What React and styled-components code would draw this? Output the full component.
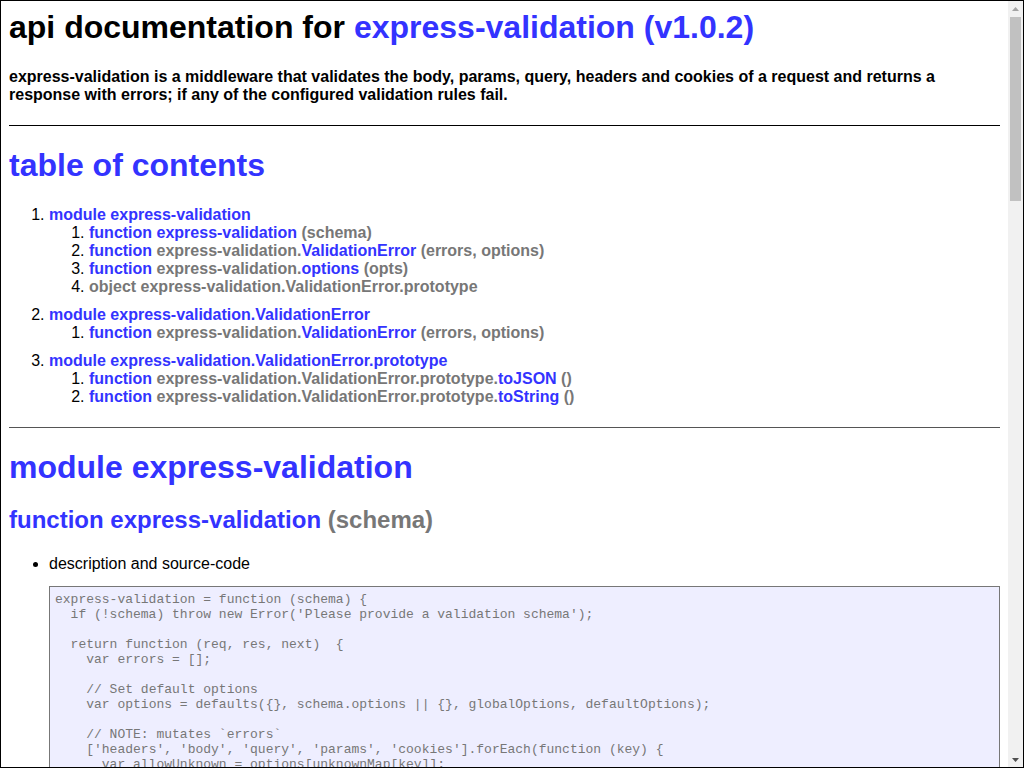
import React from "react";
import styled, { createGlobalStyle } from "styled-components";

const Global = createGlobalStyle`
  html, body { margin: 0; padding: 0; height: 100%; overflow: hidden; background: #fff; }
  #root { height: 100%; }
`;

const Frame = styled.div`
  box-sizing: border-box;
  height: 100vh;
  border: 1px solid #000;
  display: flex;
  font-family: "Liberation Sans", Arial, Helvetica, sans-serif;
  color: #000;
`;

const Page = styled.main`
  flex: 1;
  min-width: 0;
  overflow: hidden;
  padding: 0 8px 8px;
`;

const Rail = styled.div`
  width: 15px;
  flex: none;
  display: flex;
  flex-direction: column;
  background: #f1f1f1;
`;

const RailButton = styled.div`
  height: 15px;
  flex: none;
  display: flex;
  align-items: center;
  justify-content: center;
`;

const Track = styled.div`
  flex: 1;
  padding: 1px 2px 0;
`;

const Thumb = styled.div`
  height: 184px;
  background: #c1c1c1;
`;

const Title = styled.h1`
  font-size: 32px;
  font-weight: bold;
  margin: 8px 0 22px;
`;

const Lede = styled.h4`
  font-size: 16px;
  font-weight: bold;
  margin: 0 0 21px;
`;

const Section = styled.div`
  border-top: 1px solid ${(p) => (p.$tone === "muted" ? "#555" : "#000")};
  margin-top: 20px;
`;

const Heading = styled.h1`
  font-size: 32px;
  font-weight: bold;
  margin: 21px 0 20px;
`;

const FnHeading = styled.h2`
  font-size: 24px;
  font-weight: bold;
  margin: 19px 0 21px;
`;

const Link = styled.a`
  color: #33f;
  font-weight: bold;
  text-decoration: none;
  cursor: pointer;
  &:hover { text-decoration: underline; }
`;

const Sig = styled.span`
  color: #777;
  font-weight: bold;
`;

const TocList = styled.ol`
  margin: ${(p) => (p.$nested ? "0" : "22px 0 21px")};
  padding-left: 40px;
`;

const TocItem = styled.li`
  margin-top: ${(p) => (p.$module ? "10px" : "0")};
  color: #000;
`;

const DetailList = styled.ul`
  margin: 16px 0;
  padding-left: 40px;
`;

const DetailItem = styled.li`
  color: #000;
  font-size: 16px;
`;

const Code = styled.pre`
  margin: 13px 0;
  padding: 5px;
  border: 1px solid #777;
  background: #eef;
  color: #777;
  font-family: "Liberation Mono", "Courier New", monospace;
  font-size: 13px;
  line-height: 15px;
  white-space: pre-wrap;
  overflow: auto;
`;

const Footer = styled.div`
  margin-top: 20px;
  text-align: center;
  color: #555;
  font-size: 16px;
`;

const Q = "express-validation";

const mainSrc = `express-validation = function (schema) {
  if (!schema) throw new Error('Please provide a validation schema');

  return function (req, res, next)  {
    var errors = [];

    // Set default options
    var options = defaults({}, schema.options || {}, globalOptions, defaultOptions);

    // NOTE: mutates \`errors\`
    ['headers', 'body', 'query', 'params', 'cookies'].forEach(function (key) {
      var allowUnknown = options[unknownMap[key]];
      var entireObject = req[key];
      var toValidateObj = schema[key];
      if (!toValidateObj) return;

      var toValidate = toValidateObj;
      validate(errors, req[key], toValidate, key, allowUnknown, options.contextRequest ? req : null);
    });

    if (errors && errors.length === 0) return next();

    return next(new ValidationError(errors, options));
  };
}`;

const errSrc = `function ValidationError(errors, options) {
  this.name = 'ValidationError';
  this.message = 'validation error';
  this.errors = errors;
  this.flatten = options.flatten;
  this.status = options.status;
  this.statusText = options.statusText;
}`;

const optSrc = `function (opts) {
  if (!opts) {
    globalOptions = {};
    return;
  }

  globalOptions = defaults({}, globalOptions, opts);
}`;

const jsonSrc = `function () {
  if (this.flatten) return flatten(map(this.errors, 'messages'));
  return {
    status: this.status,
    statusText: this.statusText,
    errors: this.errors
  };
}`;

const strSrc = `function () {
  return JSON.stringify(this.toJSON());
}`;

const FnBlock = ({ kind, prefix, name, sig, src, usage }) => (
  <>
    <FnHeading>
      <Link>{kind} </Link>
      {prefix && <Sig>{prefix}</Sig>}
      <Link>{name}</Link> <Sig>{sig}</Sig>
    </FnHeading>
    <DetailList>
      <DetailItem>
        description and source-code
        <Code>{src}</Code>
      </DetailItem>
      <DetailItem>
        example usage
        <Code>{usage}</Code>
      </DetailItem>
    </DetailList>
  </>
);

const Arrow = ({ down, color }) => (
  <svg width="7" height="4" viewBox="0 0 7 4" aria-hidden="true">
    <polygon points={down ? "0,0 7,0 3.5,4" : "0,4 7,4 3.5,0"} fill={color} />
  </svg>
);

export default function App() {
  return (
    <>
      <Global />
      <Frame>
        <Page>
          <Title>
            api documentation for <Link>express-validation (v1.0.2)</Link>
          </Title>
          <Lede>
            express-validation is a middleware that validates the body, params,
            query, headers and cookies of a request and returns a response with
            errors; if any of the configured validation rules fail.
          </Lede>

          <Section>
            <Heading>
              <Link>table of contents</Link>
            </Heading>
            <TocList>
              <TocItem $module>
                <Link>module express-validation</Link>
                <TocList $nested>
                  <TocItem>
                    <Link>function express-validation</Link> <Sig>(schema)</Sig>
                  </TocItem>
                  <TocItem>
                    <Link>function </Link>
                    <Sig>express-validation.</Sig>
                    <Link>ValidationError</Link> <Sig>(errors, options)</Sig>
                  </TocItem>
                  <TocItem>
                    <Link>function </Link>
                    <Sig>express-validation.</Sig>
                    <Link>options</Link> <Sig>(opts)</Sig>
                  </TocItem>
                  <TocItem>
                    <Sig>object express-validation.ValidationError.prototype</Sig>
                  </TocItem>
                </TocList>
              </TocItem>
              <TocItem $module>
                <Link>module express-validation.ValidationError</Link>
                <TocList $nested>
                  <TocItem>
                    <Link>function </Link>
                    <Sig>express-validation.</Sig>
                    <Link>ValidationError</Link> <Sig>(errors, options)</Sig>
                  </TocItem>
                </TocList>
              </TocItem>
              <TocItem $module>
                <Link>module express-validation.ValidationError.prototype</Link>
                <TocList $nested>
                  <TocItem>
                    <Link>function </Link>
                    <Sig>express-validation.ValidationError.prototype.</Sig>
                    <Link>toJSON</Link> <Sig>()</Sig>
                  </TocItem>
                  <TocItem>
                    <Link>function </Link>
                    <Sig>express-validation.ValidationError.prototype.</Sig>
                    <Link>toString</Link> <Sig>()</Sig>
                  </TocItem>
                </TocList>
              </TocItem>
            </TocList>
          </Section>

          <Section $tone="muted">
            <Heading>
              <Link>module express-validation</Link>
            </Heading>
            <FnBlock kind="function" name={Q} sig="(schema)" src={mainSrc} usage="n/a" />
            <FnBlock kind="function" prefix="express-validation." name="ValidationError" sig="(errors, options)" src={errSrc} usage="n/a" />
            <FnBlock kind="function" prefix="express-validation." name="options" sig="(opts)" src={optSrc} usage="n/a" />
          </Section>

          <Section $tone="muted">
            <Heading>
              <Link>module express-validation.ValidationError</Link>
            </Heading>
            <FnBlock kind="function" prefix="express-validation." name="ValidationError" sig="(errors, options)" src={errSrc} usage="n/a" />
          </Section>

          <Section $tone="muted">
            <Heading>
              <Link>module express-validation.ValidationError.prototype</Link>
            </Heading>
            <FnBlock kind="function" prefix="express-validation.ValidationError.prototype." name="toJSON" sig="()" src={jsonSrc} usage="n/a" />
            <FnBlock kind="function" prefix="express-validation.ValidationError.prototype." name="toString" sig="()" src={strSrc} usage="n/a" />
          </Section>

          <Footer>
            [ this document was created with <Link>utility2</Link> ]
          </Footer>
        </Page>
        <Rail aria-hidden="true">
          <RailButton>
            <Arrow color="#a3a3a3" />
          </RailButton>
          <Track>
            <Thumb />
          </Track>
          <RailButton>
            <Arrow down color="#505050" />
          </RailButton>
        </Rail>
      </Frame>
    </>
  );
}
